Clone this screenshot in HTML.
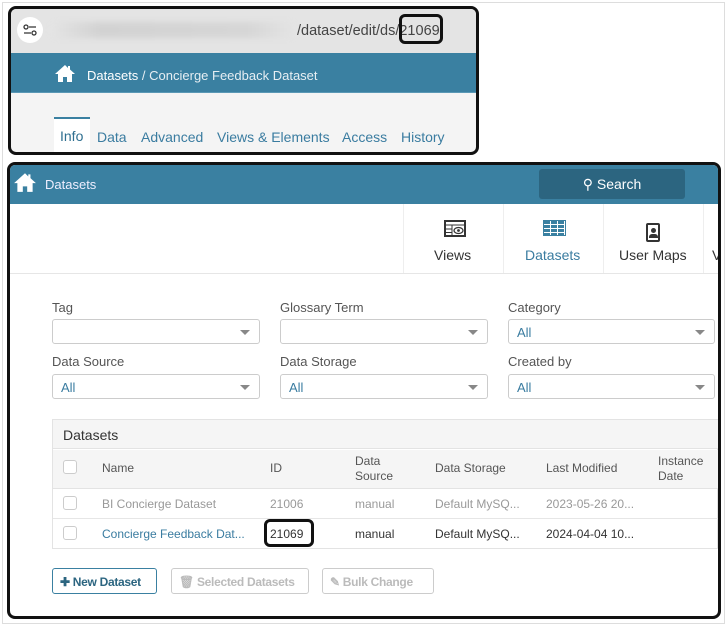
<!DOCTYPE html>
<html><head><meta charset="utf-8"><style>
*{box-sizing:border-box;margin:0;padding:0}
body{width:728px;height:627px;background:#fff;position:relative;overflow:hidden;font-family:"Liberation Sans",sans-serif;font-size:13px;color:#333}
.a{position:absolute;white-space:nowrap}
.sel{position:absolute;height:25px;border:1px solid #ccc;border-radius:3px;background:#fff;color:#3a7ca0;font-size:13px;padding:5px 8px}
.sel:after{content:"";position:absolute;right:9px;top:10px;border-left:5px solid transparent;border-right:5px solid transparent;border-top:5px solid #888}
.lbl{position:absolute;font-size:13px;color:#555}
.cb{position:absolute;left:63px;width:14px;height:14px;border:1px solid #ccc;border-radius:3px;background:#fff}
.btn{position:absolute;top:568px;height:26px;border:1px solid #ccc;border-radius:3px;font-size:12px;font-weight:bold;color:#bbb;padding:6px 7px;background:#fff;white-space:nowrap;letter-spacing:-0.3px}
.tab{position:absolute;top:120px;font-size:14px;color:#3a7ca0}
</style></head><body>
<div class="a" style="left:2px;top:2px;width:723px;height:622px;border:1px solid #ddd"></div>

<!-- top box -->
<div class="a" style="left:8px;top:6px;width:471px;height:149px;border:3px solid #111;border-radius:8px;overflow:hidden;background:#f4f4f4">
  <div class="a" style="left:0;top:0;width:100%;height:44px;background:#e4e4e4"></div>
  <div class="a" style="left:6px;top:8px;width:26px;height:26px;border-radius:13px;background:#fff"></div>
  <svg class="a" style="left:12px;top:14px" width="14" height="14" viewBox="0 0 14 14"><circle cx="3" cy="4" r="2" fill="none" stroke="#333" stroke-width="1.3"/><line x1="6" y1="4" x2="13" y2="4" stroke="#333" stroke-width="1.3"/><circle cx="11" cy="10" r="2" fill="none" stroke="#333" stroke-width="1.3"/><line x1="1" y1="10" x2="8" y2="10" stroke="#333" stroke-width="1.3"/></svg>
  <div class="a" style="left:40px;top:13px;width:245px;height:16px;background:linear-gradient(90deg,#e4e4e4,#d2d2d2 20%,#d6d6d6 80%,#e4e4e4);filter:blur(3px);border-radius:6px"></div>
  <div class="a" style="left:286px;top:14px;font-size:14.5px;color:#444">/dataset/edit/ds/21069</div>
  <div class="a" style="left:0;top:44px;width:100%;height:40px;background:#3a80a1;border-bottom:1px solid #5a98b5"></div>
  <svg class="a" style="left:43px;top:55px" width="22" height="18" viewBox="0 0 22 18"><path d="M11 1L1 10h3v8h5v-5h4v5h5v-8h3L16 5.5V2h-2v2z" fill="#fff"/></svg>
  <div class="a" style="left:76px;top:59px;color:#fff;font-size:13px">Datasets <span style="color:#e6eef3">/ Concierge Feedback Dataset</span></div>
  <div class="a" style="left:43px;top:108px;width:36px;height:40px;background:#fff;border-top:2px solid #3a80a1"></div>
  <div class="tab" style="left:49px;top:119px;color:#2f6f90">Info</div>
  <div class="tab" style="left:86px">Data</div>
  <div class="tab" style="left:130px">Advanced</div>
  <div class="tab" style="left:206px">Views &amp; Elements</div>
  <div class="tab" style="left:331px">Access</div>
  <div class="tab" style="left:390px">History</div>
</div>
<div class="a" style="left:399px;top:14px;width:44px;height:30px;border:3px solid #111;border-radius:6px"></div>

<!-- bottom box -->
<div class="a" style="left:7px;top:162px;width:714px;height:457px;border:3px solid #111;border-radius:8px;overflow:hidden;background:#fff">
  <div class="a" style="left:0;top:0;width:100%;height:39px;background:#3a80a1"></div>
  <svg class="a" style="left:3px;top:6px" width="24" height="22" viewBox="0 0 22 18"><path d="M11 1L1 10h3v8h5v-5h4v5h5v-8h3L16 5.5V2h-2v2z" fill="#fff"/></svg>
  <div class="a" style="left:35px;top:12px;color:#eef;font-size:13px">Datasets</div>
  <div class="a" style="left:529px;top:4px;width:146px;height:30px;background:#2c6580;border-radius:3px;color:#fff;font-size:14px;text-align:center;line-height:30px">&#9906; Search</div>
  <div class="a" style="left:0;top:108px;width:100%;height:1px;background:#e6e6e6"></div>
  <div class="a" style="left:393px;top:39px;width:1px;height:69px;background:#eee"></div>
  <div class="a" style="left:493px;top:39px;width:1px;height:69px;background:#eee"></div>
  <div class="a" style="left:593px;top:39px;width:1px;height:69px;background:#eee"></div>
  <div class="a" style="left:693px;top:39px;width:1px;height:69px;background:#eee"></div>
  <svg class="a" style="left:434px;top:55px" width="22" height="17" viewBox="0 0 22 17"><rect x="1" y="1" width="20" height="15" fill="#fff" stroke="#333" stroke-width="2"/><line x1="1" y1="5" x2="21" y2="5" stroke="#333"/><line x1="1" y1="9" x2="8" y2="9" stroke="#333"/><line x1="1" y1="12.5" x2="8" y2="12.5" stroke="#333"/><line x1="8" y1="5" x2="8" y2="16" stroke="#333"/><ellipse cx="14.5" cy="10.5" rx="4.5" ry="3" fill="none" stroke="#333" stroke-width="1.3"/><circle cx="14.5" cy="10.5" r="1.4" fill="#333"/></svg>
  <div class="a" style="left:424px;top:82px;font-size:14px;color:#333">Views</div>
  <div class="a" style="left:533px;top:55px;width:23px;height:16px;background:#3a80a1;border:1px solid #3a80a1;background-image:repeating-linear-gradient(90deg,transparent 0 6px,#fff 6px 7px),repeating-linear-gradient(transparent 0 3px,#fff 3px 4px)"></div>
  <div class="a" style="left:515px;top:82px;font-size:14px;color:#3a7ca0">Datasets</div>
  <div class="a" style="left:636px;top:58px;width:14px;height:19px;border:2px solid #333;border-radius:2px"></div>
  <div class="a" style="left:641px;top:63px;width:5px;height:5px;border-radius:3px;background:#333"></div>
  <div class="a" style="left:639px;top:69px;width:9px;height:4px;background:#333;border-radius:3px 3px 0 0"></div>
  <div class="a" style="left:609px;top:82px;font-size:14px;color:#333">User Maps</div>
  <div class="a" style="left:702px;top:82px;font-size:14px;color:#333">V</div>
</div>

<div class="lbl" style="left:52px;top:300px">Tag</div>
<div class="lbl" style="left:280px;top:300px">Glossary Term</div>
<div class="lbl" style="left:508px;top:300px">Category</div>
<div class="sel" style="left:52px;top:319px;width:208px"></div>
<div class="sel" style="left:280px;top:319px;width:208px"></div>
<div class="sel" style="left:508px;top:319px;width:207px">All</div>
<div class="lbl" style="left:52px;top:354px">Data Source</div>
<div class="lbl" style="left:280px;top:354px">Data Storage</div>
<div class="lbl" style="left:508px;top:354px">Created by</div>
<div class="sel" style="left:52px;top:374px;width:208px">All</div>
<div class="sel" style="left:280px;top:374px;width:208px">All</div>
<div class="sel" style="left:508px;top:374px;width:207px">All</div>

<!-- table -->
<div class="a" style="left:52px;top:419px;width:666px;height:130px;border:1px solid #e3e3e3;background:#fff"></div>
<div class="a" style="left:53px;top:420px;width:665px;height:29px;background:#f5f5f5;border-bottom:1px solid #e3e3e3"></div>
<div class="a" style="left:63px;top:427px;font-size:14px;color:#333">Datasets</div>
<div class="a" style="left:53px;top:450px;width:665px;height:39px;background:#f5f5f5;border-bottom:1px solid #e3e3e3"></div>
<div class="a" style="left:53px;top:518px;width:665px;height:1px;background:#e6e6e6"></div>
<div class="cb" style="top:460px"></div>
<div class="cb" style="top:496px"></div>
<div class="cb" style="top:526px"></div>
<div class="a" style="left:102px;top:461px;font-size:12px;color:#555">Name</div>
<div class="a" style="left:270px;top:461px;font-size:12px;color:#555">ID</div>
<div class="a" style="left:355px;top:454px;font-size:12px;color:#555;line-height:15px">Data<br>Source</div>
<div class="a" style="left:435px;top:461px;font-size:12px;color:#555">Data Storage</div>
<div class="a" style="left:546px;top:461px;font-size:12px;color:#555">Last Modified</div>
<div class="a" style="left:658px;top:454px;font-size:12px;color:#555;line-height:15px">Instance<br>Date</div>
<div class="a" style="left:102px;top:497px;font-size:12px;color:#999">BI Concierge Dataset</div>
<div class="a" style="left:270px;top:497px;font-size:12px;color:#999">21006</div>
<div class="a" style="left:355px;top:497px;font-size:12px;color:#999">manual</div>
<div class="a" style="left:435px;top:497px;font-size:12px;color:#999">Default MySQ...</div>
<div class="a" style="left:546px;top:497px;font-size:12px;color:#999">2023-05-26 20...</div>
<div class="a" style="left:102px;top:527px;font-size:12px;color:#3a7ca0">Concierge Feedback Dat...</div>
<div class="a" style="left:264px;top:519px;width:50px;height:28px;border:3px solid #111;border-radius:6px"></div>
<div class="a" style="left:270px;top:527px;font-size:12px;color:#333">21069</div>
<div class="a" style="left:355px;top:527px;font-size:12px;color:#333">manual</div>
<div class="a" style="left:435px;top:527px;font-size:12px;color:#333">Default MySQ...</div>
<div class="a" style="left:546px;top:527px;font-size:12px;color:#333">2024-04-04 10...</div>

<div class="btn" style="left:52px;width:105px;border-color:#3a80a1;color:#2c6580">✚ New Dataset</div>
<div class="btn" style="left:171px;width:138px">🗑 Selected Datasets</div>
<div class="btn" style="left:322px;width:112px">✎ Bulk Change</div>
</body></html>
